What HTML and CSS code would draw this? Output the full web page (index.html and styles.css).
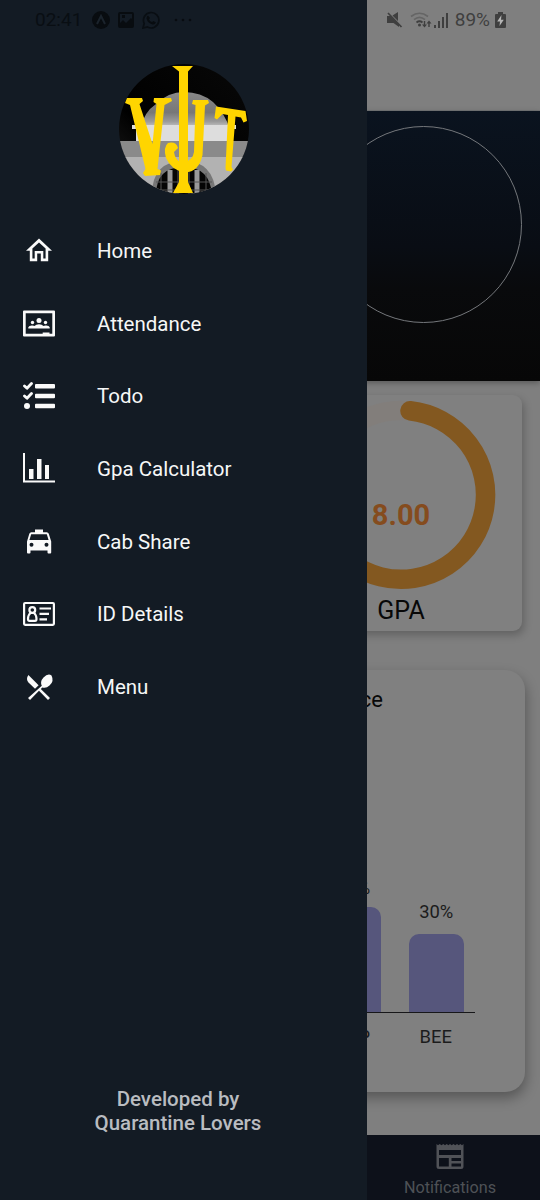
FILE: index.html
```html
<!DOCTYPE html>
<html lang="en">
<head>
<meta charset="utf-8">
<title>VJIT</title>
<link rel="stylesheet" href="styles.css">
</head>
<body>
<div class="app">
  <main class="screen">
    <header class="top"></header>
    <section class="hero"><div class="avatar"></div></section>
    <section class="cards">
      <article class="gpa">
        <svg class="ring" width="190" height="190" viewBox="0 0 190 190" fill="none">
          <circle class="track" cx="95" cy="95" r="84.5"/>
          <path class="arc" d="M104 10.8A84.5 84.5 0 1 1 14.6 69"/>
        </svg>
        <strong class="score">8.00</strong>
        <span class="gpa-label">GPA</span>
      </article>
    </section>
    <section class="chart">
      <h2 class="chart-title">Attendance</h2>
      <div class="bars">
        <div class="col"><span>40%</span><div class="bar" style="height:105px"></div></div>
        <div class="col"><span>30%</span><div class="bar" style="height:78px"></div></div>
      </div>
      <div class="names"><span>CSP</span><span>BEE</span></div>
    </section>
    <nav class="tabs">
      <div class="tab">
        <svg width="28" height="26" viewBox="0 0 28 26"><path fill-rule="evenodd" d="M.5 0 2 1.300 3.700 0 5.500 1.300 7.300 0 9 1.300 10.700 0 12.400 1.300 14 0 15.700 1.300 17.500 0 19.200 1.300 21 0 22.700 1.300 24.300 0 26 1.300 27.500 0V22.500Q27.500 25 25 25H3Q.5 25 .5 22.500ZM3 6V11H25V6ZM3 14V22.500H12.800V14ZM15.500 14V17H25V14ZM15.500 19.500V22.500H25V19.500Z"/></svg>
        <span>Notifications</span>
      </div>
    </nav>
  </main>

  <aside class="drawer">
    <svg class="logo" width="132" height="132" viewBox="0 0 132 132">
      <defs>
        <clipPath id="disc"><circle cx="66" cy="66" r="65"/></clipPath>
        <linearGradient id="dome" x1="0" y1="0" x2="0" y2="1"><stop offset="0" stop-color="#898989"/><stop offset=".55" stop-color="#777"/><stop offset=".8" stop-color="#9b9b9b"/><stop offset="1" stop-color="#d4d4d4"/></linearGradient>
        <linearGradient id="night" x1="0" y1="1" x2="1" y2="0"><stop offset="0" stop-color="#222"/><stop offset=".35" stop-color="#000"/><stop offset="1" stop-color="#080808"/></linearGradient>
      </defs>
      <g clip-path="url(#disc)">
        <path fill="url(#night)" d="M0 0H132V132H0Z"/>
        <path fill="url(#dome)" d="M22 66Q26 49 38 41Q50 29 66 29Q83 29 95 39Q106 49 112 66Z"/>
        <path fill="#ddd" d="M14 62H118V66H114V79H18V66H14Z"/>
        <path fill="#8a8a8a" d="M0 78H132V95H0Z"/>
        <path fill="#b2b2b2" d="M0 94H132V132H0Z"/>
        <path fill="#777" d="M34 132Q34 98 66 98Q96 98 98 132Z"/>
        <path fill="#050505" d="M38 132Q38 104 66 104Q92 104 94 132Z"/>
        <path stroke="#999" stroke-width="5" d="M52 107V132M79 107V132"/>
        <path stroke="#555" d="M43 110V132M60 105V132M71 105V132M88 110V132M38 119H94M38 127H94"/>
      </g>
      <g fill="#ffd500">
        <path d="M54 3H75L70 8.500V119L75 130H55L61 119V8.500Z"/>
        <path d="M9 35H24L25 38 21.500 41 34.500 81 38.500 41 35.500 39 36 35H53L54 38 46.500 42 39.500 106 43 107.500 42 112 27 113 25 110 27.500 106 12 42 7 40Z"/>
        <path d="M75 37H90L91 40 87 42.500 84.500 92Q81 109 67 109.500Q53 107 48 95Q45 84 50 80Q58 78 60 85L56 89Q57 98 65 100Q75 97 76 89L77.500 42 74 41Z"/>
        <path d="M98 43.500 127.500 48 129 58 125.500 59.500 123 54.500 117.500 53.500 113.500 104 115 106.500 113 108.500 108 107.500 107.500 105 110 52 104.500 51 99 56.500 96.500 55Z"/>
      </g>
    </svg>

    <ul class="menu">
      <li><svg viewBox="0 0 32 32"><path fill-rule="evenodd" d="M16 3.500 29 15.700H25.200V26.300H17.800V18.500H14.200V26.300H6.800V15.700H3ZM16 7.600 9.400 13.500V23.500H11.700V16H20.300V23.500H22.600V13.500Z"/></svg><span>Home</span></li>
      <li><svg viewBox="0 0 32 32"><path fill-rule="evenodd" d="M1 2.500H31Q32 2.500 32 3.500V27.500Q32 28.500 31 28.500H1Q0 28.500 0 27.500V3.500Q0 2.500 1 2.500ZM2.700 5.200V25.800H19.700V24.500H26.500V25.800H29.300V5.200Z"/><circle cx="16" cy="12.500" r="2.500"/><circle cx="9.500" cy="14.500" r="1.700"/><circle cx="22.500" cy="14.500" r="1.700"/><path d="M5.300 20.500V19.300Q6 17.300 9.300 17.500Q11 17.700 11.500 18Q13 16.300 16 16.300T20.500 18Q21 17.500 22.700 17.500Q26 17.300 26.700 19.300V20.500Z"/></svg><span>Attendance</span></li>
      <li><svg viewBox="0 0 32 32"><path d="M13 4H31Q32 4 32 5V7.500Q32 8.500 31 8.500H13Q12 8.500 12 7.500V5Q12 4 13 4ZM13 13.700H31Q32 13.700 32 14.700V17.200Q32 18.200 31 18.200H13Q12 18.200 12 17.200V14.700Q12 13.700 13 13.700ZM13 23.700H31Q32 23.700 32 24.700V27.200Q32 28.200 31 28.200H13Q12 28.200 12 27.200V24.700Q12 23.700 13 23.700Z"/><circle cx="4" cy="26" r="3"/><path class="line" d="m1.500 6 2.500 2.300L8.500 3.500M1.500 16l2.500 2.300L8.500 13.500"/></svg><span>Todo</span></li>
      <li><svg viewBox="0 0 32 32"><path d="M0 0H2V27.500H32V29.500H0ZM6 16H10.500V26H6ZM14 6H18.500V26H14ZM22 12H26V26H22Z"/></svg><span>Gpa Calculator</span></li>
      <li><svg viewBox="0 0 32 32"><path fill-rule="evenodd" d="M12 3.500H20V6.200H23.800Q25.200 6.200 25.800 7.700L28.200 15.500V26.500Q28.200 27.500 27.200 27.500H25.500Q24.500 27.500 24.500 26.500V24.500H7.500V26.500Q7.500 27.500 6.500 27.500H5Q4 27.500 4 26.500V15.500L6.300 7.700Q6.800 6.200 8.300 6.200H12ZM8.200 8.200 6.400 14H25.600L23.800 8.200ZM8.500 16.800A2 2 0 1 0 8.500 20.800A2 2 0 1 0 8.500 16.800ZM23.500 16.800A2 2 0 1 0 23.500 20.800A2 2 0 1 0 23.500 16.800Z"/></svg><span>Cab Share</span></li>
      <li><svg viewBox="0 0 32 32"><g class="outline"><rect x="1.100" y="5" width="29.800" height="21.800" rx="1"/><circle cx="9.300" cy="12" r="2.900"/><path d="M7.500 15Q5 17 5 21Q5 22.800 6.500 22.800H12Q13.500 22.800 13.500 21Q13.500 17 11 15Z"/><path d="M16.500 10.500H28M16.500 15.900H26M16.500 21.300H24"/></g></svg><span>ID Details</span></li>
      <li><svg viewBox="0 0 32 32"><path d="M5.400 4 15.600 14.200 12 17.800 5.500 11.500Q2.500 8 5.400 4Z"/><path d="M18.800 14.800Q16.800 10.500 20.500 6.500Q25 2 28.500 4.500Q31.500 10.500 26.500 14.500Q23 17.800 19.300 16.400L17.800 17.900 27 26.900 25 28.900 16 19.800 7 28.900 5 26.900Z"/></svg><span>Menu</span></li>
    </ul>
    <p class="credit">Developed by<br>Quarantine Lovers</p>
  </aside>

  <div class="status">
    <div class="status-left">
      <span class="clock">02:41</span>
      <svg width="18" height="18" viewBox="0 0 18 18"><circle cx="9" cy="9" r="9"/><path class="cut" d="m5 13 4-8 4 8"/></svg>
      <svg width="16" height="16" viewBox="0 0 16 16"><path fill-rule="evenodd" d="M2 0H14Q16 0 16 2V14Q16 16 14 16H2Q0 16 0 14V2Q0 0 2 0ZM2 2V11L5 8 8 11 13 6 14 7V2ZM4 3H7V6H4Z"/></svg>
      <svg width="18" height="18" viewBox="0 0 18 18"><path class="ink" d="M1 17 2.200 12.500A7.700 7.700 0 1 1 5.500 16Z"/><path d="M6 4.500 8 7 7 8.500Q8 10.500 10 11L11.500 10 14 11.500Q13 14 10.500 13.500Q5.500 12 4.500 7.500Q4.500 5 6 4.500Z"/></svg>
      <svg width="18" height="4" viewBox="0 0 18 4"><circle cx="2" cy="2" r="1.300"/><circle cx="9" cy="2" r="1.300"/><circle cx="16" cy="2" r="1.300"/></svg>
    </div>
    <div class="status-right">
      <svg width="16" height="16" viewBox="0 0 16 16"><path d="M0 4H3.500L12 12.500V15L6.500 11H0ZM5.500 3.500 11 0V9Z"/><path class="ink" d="m1 1 13.500 14"/></svg>
      <svg width="22" height="16" viewBox="0 0 22 16"><path class="faint" d="M1 4.500Q9.500-2 18 4.500M4 7.700Q9.500 3 15 7.700"/><path class="ink" d="M6.500 10.500Q9.500 8 12.500 10.500"/><circle cx="9.500" cy="13" r="1.500"/><path d="M13.800 9H15.200V12.500H17L14.500 15.500 12 12.500H13.800ZM18.300 15V11.500H16.500L19 8.500 21.500 11.500H19.700V15Z"/></svg>
      <svg width="14" height="16" viewBox="0 0 14 16"><path d="M0 13H2V16H0ZM4 9H6V16H4ZM8 5H10V16H8ZM12 1H14V16H12Z"/></svg>
      <span class="percent">89%</span>
      <svg class="battery" width="11" height="16" viewBox="0 0 11 16"><path d="M3 0H8V2H10Q11 2 11 3V15Q11 16 10 16H1Q0 16 0 15V3Q0 2 1 2H3Z"/><path class="bolt" d="M6.500 3 2.200 9.500H5L4.500 14 8.800 7.700H6Z"/></svg>
    </div>
  </div>
</div>
</body>
</html>
```
FILE: styles.css
```css
* { box-sizing: border-box; }
body { margin: 0; font-family: Roboto, "Noto Sans", sans-serif; }
.app { position: relative; width: 540px; height: 1200px; overflow: hidden; }
svg { display: block; flex: none; }

.screen { display: flex; flex-direction: column; height: 1200px; background: #7f7f7f; }
.top { height: 111px; flex: none; border-bottom: 1px solid #747677; }
.hero { height: 270px; flex: none; padding: 15px 18.500px 0; display: flex; justify-content: flex-end; background: linear-gradient(#0a131f, #090d14 50%, #090a0c 66%, #070707); box-shadow: 0 2px 6px rgba(0,0,0,.3); }
.avatar { width: 197px; height: 197px; border: 1px solid #74777b; border-radius: 50%; }
.cards { display: flex; justify-content: flex-end; padding: 14px 18px 0; flex: none; }
.gpa { width: 242px; height: 236px; border-radius: 9px; background: #808080; box-shadow: 2px 4px 9px rgba(0,0,0,.24); display: grid; justify-items: center; grid-template-rows: 200px 36px; }
.ring { grid-area: 1 / 1; margin-top: 5px; }
.track { stroke: #827e7b; stroke-width: 19.5; }
.arc { stroke: #835820; stroke-width: 19.5; stroke-linecap: round; }
.score { grid-area: 1 / 1; align-self: center; margin-top: 39px; font-size: 29px; line-height: 34px; color: #854c1e; }
.gpa-label { font-size: 25px; line-height: 31px; color: #080808; }

.chart { height: 422px; flex: none; margin: 39px 15px 0; padding: 16px 50px 0; border-radius: 20px; background: #808080; box-shadow: 1px 6px 13px rgba(0,0,0,.32); display: flex; flex-direction: column; }
.chart-title { margin: 0; padding-right: 92px; text-align: right; font-weight: 400; font-size: 22px; line-height: 27px; color: #080808; }
.bars { height: 300px; display: flex; justify-content: flex-end; gap: 27.500px; padding-right: 11px; border-bottom: 1px solid #171719; }
.col { width: 55.500px; display: flex; flex-direction: column; justify-content: flex-end; align-items: center; font-size: 18.400px; line-height: 22px; gap: 11px; color: #1c1c1c; }
.col:first-child { gap: 8px; }
.bar { width: 55.500px; flex: none; background: #56567c; border-radius: 10px 10px 0 0; }
.names { display: flex; justify-content: flex-end; gap: 27.500px; padding: 13px 11.500px 0; font-size: 18.400px; line-height: 22px; color: #1c1c1c; }
.names span { width: 55.500px; text-align: center; }

.tabs { height: 65px; flex: none; margin-top: auto; background: #0d111a; display: flex; justify-content: flex-end; padding: 9px 0 0; }
.tab { width: 180px; display: flex; flex-direction: column; align-items: center; gap: 8px; color: #4e5156; font-size: 16.200px; line-height: 20px; }
.tab svg { fill: #505257; }

.drawer { position: absolute; inset: 0 auto 0 0; width: 367px; background: #131b24; display: flex; flex-direction: column; }
.logo { margin: 63px 0 0 118px; }
.menu { list-style: none; margin: 20px 0 0; padding: 0 23px; }
.menu li { height: 72.600px; display: flex; align-items: center; gap: 42px; color: #f6f7f7; font-size: 20.500px; }
.menu svg { width: 32px; height: 32px; fill: #fafafa; }
.line { fill: none; stroke: #fafafa; stroke-width: 2.800; stroke-linecap: round; stroke-linejoin: round; }
.outline { fill: none; stroke: #fafafa; stroke-width: 2.200; }
.credit { margin: auto 11px 65px 0; text-align: center; color: #b9bcc0; font-size: 20.500px; font-weight: 500; line-height: 24px; }

.status { position: absolute; inset: 0 0 auto; height: 39px; padding: 0 34px 0 35px; display: flex; align-items: center; justify-content: space-between; font-size: 19px; }
.status-left, .status-right { display: flex; align-items: center; }
.status-left { gap: 8px; color: #090e13; fill: #080c10; }
.clock { margin-right: 2px; }
.status-left svg:last-child { margin-left: 6px; }
.cut { fill: none; stroke: #1b232c; stroke-width: 2; }
.ink { fill: none; stroke: currentColor; stroke-width: 1.700; }
.status-right { color: #3f3f3f; fill: #3f3f3f; gap: 7px; }
.status-right svg:nth-of-type(3) { margin-left: -5px; }
.faint { fill: none; stroke: #656565; stroke-width: 1.700; }
.battery { margin-left: -2px; }
.bolt { fill: #b5b5b5; }
```
